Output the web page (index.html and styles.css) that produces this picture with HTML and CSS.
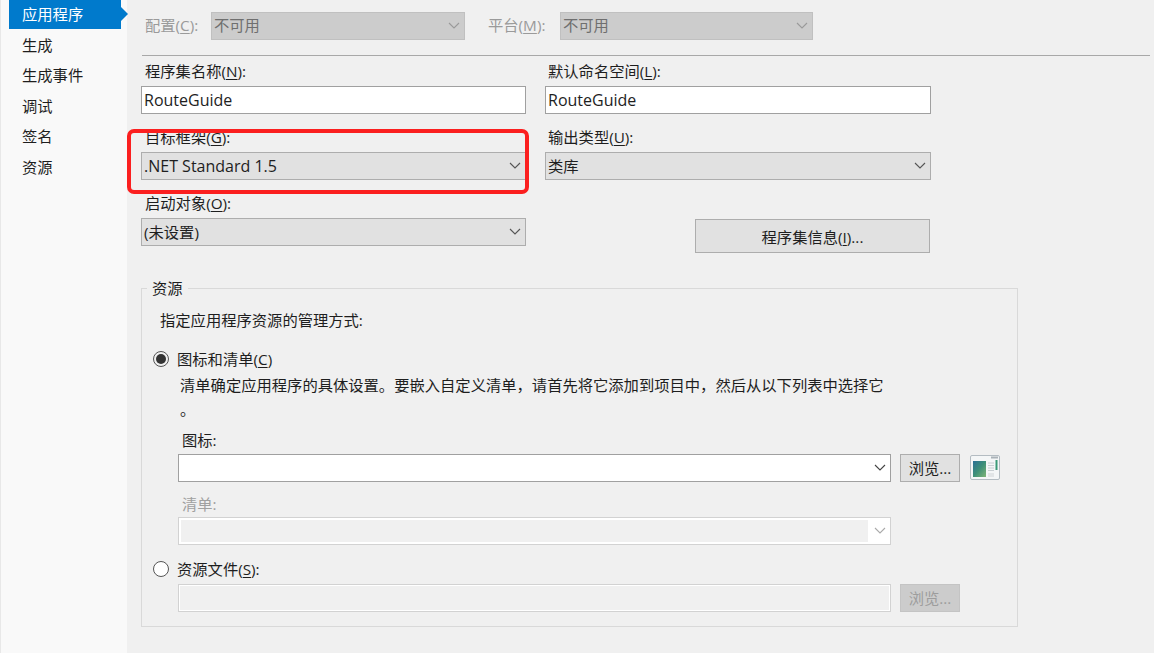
FILE: index.html
```html
<!DOCTYPE html>
<html lang="zh-CN">
<head>
<meta charset="utf-8">
<title>应用程序</title>
<link rel="stylesheet" href="styles.css">
</head>
<body>
<nav class="side">
  <div class="nav-item active">应用程序</div>
  <div class="nav-item">生成</div>
  <div class="nav-item">生成事件</div>
  <div class="nav-item">调试</div>
  <div class="nav-item">签名</div>
  <div class="nav-item">资源</div>
</nav>
<main class="main">
  <div class="topbar">
    <label class="top-label">配置(<u>C</u>):</label>
    <div class="box disabled-select cfg">不可用<svg class="chev" viewBox="0 0 12 7"><path d="M1 1l5 5 5-5"/></svg></div>
    <label class="top-label plat">平台(<u>M</u>):</label>
    <div class="box disabled-select pf">不可用<svg class="chev" viewBox="0 0 12 7"><path d="M1 1l5 5 5-5"/></svg></div>
  </div>
  <div class="rule"></div>
  <div class="form">
    <div class="field">
      <label>程序集名称(<u>N</u>):</label>
      <div class="box input latin">RouteGuide</div>
    </div>
    <div class="field col2">
      <label>默认命名空间(<u>L</u>):</label>
      <div class="box input latin">RouteGuide</div>
    </div>
    <div class="field">
      <label>目标框架(<u>G</u>):</label>
      <div class="box select latin">.NET Standard 1.5<svg class="chev" viewBox="0 0 12 7"><path d="M1 1l5 5 5-5"/></svg></div>
    </div>
    <div class="field col2">
      <label>输出类型(<u>U</u>):</label>
      <div class="box select">类库<svg class="chev" viewBox="0 0 12 7"><path d="M1 1l5 5 5-5"/></svg></div>
    </div>
    <div class="field">
      <label>启动对象(<u>O</u>):</label>
      <div class="box select">(未设置)<svg class="chev" viewBox="0 0 12 7"><path d="M1 1l5 5 5-5"/></svg></div>
    </div>
    <div class="field field-btn">
      <button class="btn wide">程序集信息(<u>I</u>)...</button>
    </div>
  </div>
  <section class="group">
    <span class="legend">资源</span>
    <p class="intro">指定应用程序资源的管理方式:</p>
    <div class="radio-row first"><span class="radio on"></span><span>图标和清单(<u>C</u>)</span></div>
    <p class="desc">清单确定应用程序的具体设置。要嵌入自定义清单，请首先将它添加到项目中，然后从以下列表中选择它<br>。</p>
    <label class="sub sub-icon">图标:</label>
    <div class="line">
      <div class="box input combo">&nbsp;<svg class="chev dark" viewBox="0 0 12 7"><path d="M1 1l5 5 5-5"/></svg></div>
      <button class="btn small">浏览...</button>
      <svg class="thumb" viewBox="0 0 30 25">
        <defs>
          <linearGradient id="thumb-fill" x1="0" y1="0" x2="1" y2="1">
            <stop offset="0" stop-color="#2a6f96"/>
            <stop offset=".5" stop-color="#3d8f78"/>
            <stop offset="1" stop-color="#7fb577"/>
          </linearGradient>
        </defs>
        <rect x=".5" y=".5" width="29" height="24" rx="1.500" fill="#f4f6f7" stroke="#b4bcc2"/>
        <rect x="3" y="6" width="13" height="16" fill="url(#thumb-fill)"/>
        <path d="M18 8h6M18 10.500h6M18 13h6M18 15.500h6" stroke="#c8ced2"/>
        <rect x="18" y="18" width="6" height="4" fill="#e2e5e7"/>
        <rect x="25.500" y="5" width="2" height="10" fill="#3b9a78"/>
        <rect x="21" y="1.500" width="7" height="2" fill="#aab2b8"/>
      </svg>
    </div>
    <label class="sub sub-manifest muted">清单:</label>
    <div class="line">
      <div class="box input combo off"><span class="fill"></span><svg class="chev" viewBox="0 0 12 7"><path d="M1 1l5 5 5-5"/></svg></div>
    </div>
    <div class="radio-row second"><span class="radio"></span><span>资源文件(<u>S</u>):</span></div>
    <div class="line line-res">
      <div class="box input combo blank"></div>
      <button class="btn small off">浏览...</button>
    </div>
  </section>
  <div class="highlight"></div>
</main>
</body>
</html>
```
FILE: styles.css
```css
* { box-sizing: border-box; }
html, body { height: 100%; }
body {
  margin: 0;
  width: 1154px;
  height: 653px;
  overflow: hidden;
  display: flex;
  background: #f0f0f0;
  color: #1e1e1e;
  font: 15.3px/20px "Open Sans", "Noto Sans CJK SC", sans-serif;
}
u { text-underline-offset: 2px; }
p { margin: 0; }
label { display: block; }

.side {
  width: 127px;
  flex: none;
  padding-left: 9px;
  background: #f9f9f9;
  border-left: 1px solid #e8e8e8;
}
.nav-item {
  height: 30.400px;
  padding: 0 0 0 13px;
  line-height: 31px;
  margin-left: -1px;
}
.nav-item.active {
  position: relative;
  height: 29px;
  width: 112px;
  line-height: 28px;
  background: #007acc;
  color: #fff;
  margin-bottom: 1px;
}
.nav-item.active::after {
  content: "";
  position: absolute;
  left: 100%;
  top: 7px;
  border-left: 7px solid #007acc;
  border-top: 7px solid transparent;
  border-bottom: 7px solid transparent;
}

.main {
  position: relative;
  flex: 1;
  padding: 12px 4px 0 14px;
}
.box {
  position: relative;
  height: 28px;
  line-height: 26px;
  padding-left: 2px;
  border: 1px solid #a0a0a0;
  white-space: nowrap;
}
.latin { font-size: 16px; }
.chev {
  position: absolute;
  right: 4px;
  top: 9px;
  width: 12px;
  height: 7px;
  fill: none;
  stroke: #555;
  stroke-width: 1.100;
}
.chev.dark { stroke: #444; }

.topbar { display: flex; height: 28px; }
.top-label { color: #9a9a9a; padding: 3px 0 0 4px; width: 70px; }
.top-label.plat { width: 72px; margin-left: 23px; padding-left: 0; }
.disabled-select { background: #cccccc; border-color: #c0c0c0; color: #6f6f6f; line-height: 24px; }
.disabled-select .chev { stroke: #9a9a9a; }
.cfg { width: 254px; }
.pf { width: 253px; }

.rule { height: 1px; background: #a8a8a8; margin: 15px 0 6px 1px; }

.form {
  display: grid;
  grid-template-columns: 385px 386px;
  column-gap: 19px;
  row-gap: 10px;
}
.field { height: 56px; }
.field label { padding-left: 4px; height: 24px; line-height: 18px; }
.field.col2 label { padding-left: 3px; }
.input { background: #fff; }
.select { background: #e1e1e1; border-color: #adadad; }
.field-btn { padding: 25px 0 0 150px; }

.btn {
  display: block;
  height: 28px;
  padding: 0;
  border: 1px solid #adadad;
  background: #e1e1e1;
  color: #1e1e1e;
  font: inherit;
}
.wide { width: 235px; height: 34px; padding-top: 1px; }
.small { width: 60px; flex: none; }
.btn.off { background: #cccccc; border-color: #c4c4c4; color: #9d9d9d; }

.group {
  position: relative;
  width: 877px;
  height: 339px;
  margin-top: 38px;
  padding: 21px 0 0 10px;
  border: 1px solid #d9d9d9;
}
.legend {
  position: absolute;
  left: 5px;
  top: -11px;
  padding: 0 5px;
  background: #f0f0f0;
}
.intro { padding-left: 8px; }
.radio-row { display: flex; align-items: center; gap: 8px; padding-left: 1px; height: 20px; }
.radio-row.first { margin-top: 19px; }
.radio-row.second { margin-top: 14px; }
.radio {
  flex: none;
  position: relative;
  width: 16px;
  height: 16px;
  border: 1px solid #555;
  border-radius: 50%;
  background: #fff;
}
.radio.on { background: #f0f0f0; }
.radio.on::after {
  content: "";
  position: absolute;
  inset: 2px;
  border-radius: 50%;
  background: #333;
}
.desc { padding-left: 28px; margin-top: 4px; line-height: 24px; width: 750px; white-space: nowrap; }
.sub { padding-left: 30px; }
.sub-icon { margin-top: 9px; height: 24px; }
.sub-manifest { margin-top: 12px; height: 23px; }
.muted { color: #a0a0a0; }

.line { display: flex; gap: 9px; padding-left: 26px; align-items: flex-start; }
.combo { width: 713px; }
.combo.off { background: #fff; border-color: #d2d2d2; padding: 2px 0 0 2px; }
.fill { display: block; width: 687px; height: 22px; background: #f0f0f0; }
.combo.off .chev { stroke: #aaa; }
.combo.blank { background: #f0f0f0; border-color: #d2d2d2; box-shadow: inset 0 0 0 1px #fff; }
.line-res { margin-top: 5px; }
.thumb { width: 30px; height: 25px; flex: none; margin: 1px 0 0 1px; }

.highlight {
  position: absolute;
  left: 0;
  top: 129px;
  width: 402px;
  height: 65px;
  border: 4px solid #fb1f1f;
  border-radius: 7px;
  pointer-events: none;
}
```
